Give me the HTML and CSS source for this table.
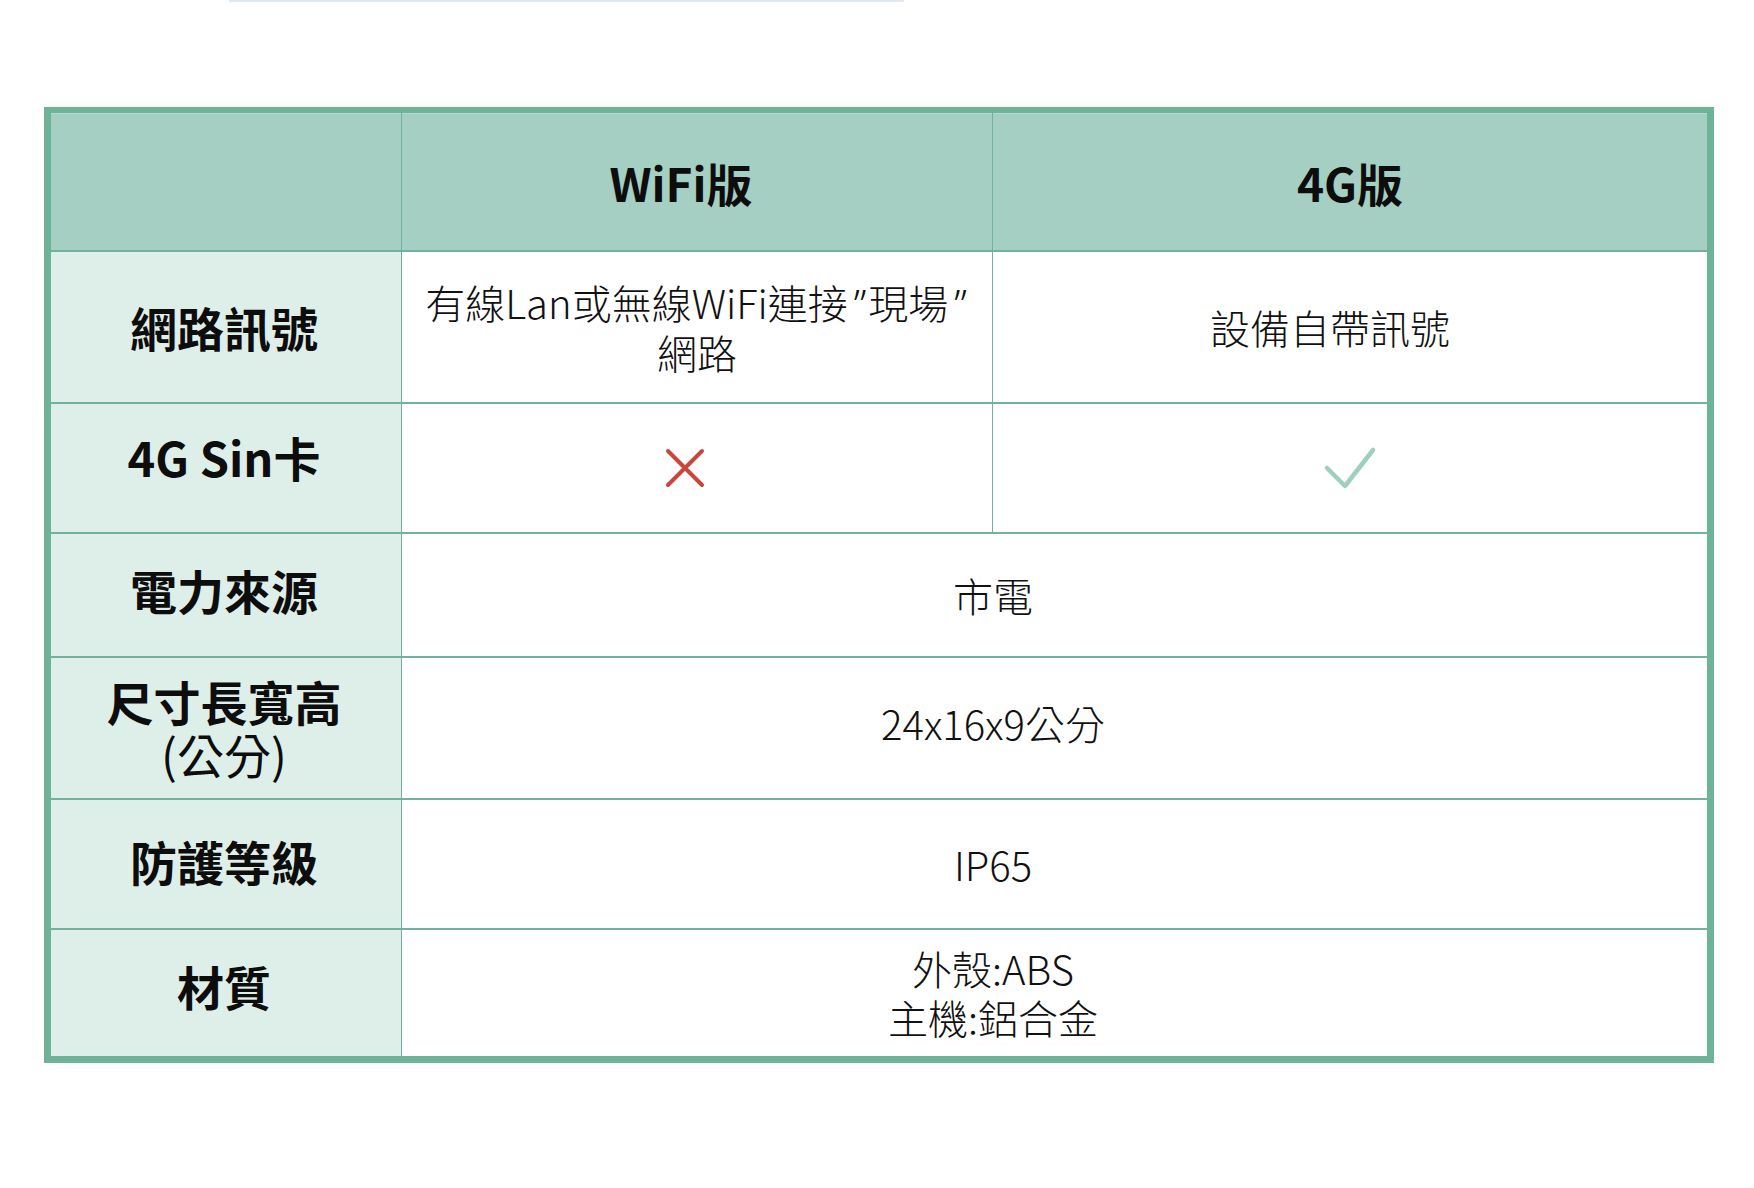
FILE: index.html
```html
<!DOCTYPE html>
<html lang="zh-Hant">
<head>
<meta charset="utf-8">
<title>規格比較</title>
<link rel="stylesheet" href="styles.css">
</head>
<body>
<div class="page">
  <div class="top-rule"></div>
  <div class="spec">
    <div class="cell head"></div>
    <div class="cell head head-wifi">WiFi版</div>
    <div class="cell head">4G版</div>

    <div class="cell label">網路訊號</div>
    <div class="cell body"><span>有線Lan或無線WiFi連接<span class="q">”</span>現場<span class="q">”</span><br>網路</span></div>
    <div class="cell body shift-left">設備自帶訊號</div>

    <div class="cell label label-up">4G Sin卡</div>
    <div class="cell body mark-cell">
      <svg class="mark" width="40" height="40" viewBox="0 0 40 40"><path d="M3 3 L37 37 M37 3 L3 37" stroke="#c9463d" stroke-width="4" stroke-linecap="round" fill="none"/></svg>
    </div>
    <div class="cell body">
      <svg class="mark" width="54" height="44" viewBox="0 0 54 44"><path d="M4 22 L22 40 L50 4" stroke="#9fcfbf" stroke-width="4.5" stroke-linecap="round" stroke-linejoin="round" fill="none"/></svg>
    </div>

    <div class="cell label up-10">電力來源</div>
    <div class="cell body merged">市電</div>

    <div class="cell label two-line">尺寸長寬高<br><span class="sub">(公分)</span></div>
    <div class="cell body merged nudge">24x16x9公分</div>

    <div class="cell label up-6">防護等級</div>
    <div class="cell body merged">IP65</div>

    <div class="cell label up-14">材質</div>
    <div class="cell body merged"><span>外殼:ABS<br>主機:鋁合金</span></div>
  </div>
</div>
</body>
</html>
```

FILE: styles.css
```css
html, body {
  margin: 0;
  padding: 0;
  background: #ffffff;
}

.page {
  width: 1754px;
  height: 1188px;
  padding-left: 44px;
  box-sizing: border-box;
  font-family: "Noto Sans CJK TC", "Noto Sans", sans-serif;
  color: #111111;
}

.top-rule {
  margin-left: 185px;
  width: 675px;
  height: 2px;
  background: #dfe9f1;
}

.spec {
  margin-top: 105px;
  width: 1670px;
  box-sizing: border-box;
  border: 7px solid #6cb398;
  border-top-width: 6px;
  background: #72b19b;
  display: grid;
  grid-template-columns: 350px 590px 714px;
  grid-template-rows: 137px 150px 128px 122px 140px 128px 126px;
  column-gap: 1px;
  row-gap: 2px;
}

.cell {
  display: flex;
  align-items: center;
  justify-content: center;
  text-align: center;
  box-sizing: border-box;
}

.head {
  background: #a5cfc2;
  font-weight: 700;
  font-size: 46px;
  color: #0d0d0d;
  border-top: 1px solid #b7dacf;
}

.head-wifi {
  padding-right: 32px;
}

.label {
  background: #deeee8;
  font-weight: 700;
  font-size: 47px;
  line-height: 1.12;
  color: #0d0d0d;
  padding-right: 4px;
}

.label-up {
  padding-bottom: 22px;
}

.up-6 {
  padding-bottom: 6px;
}

.up-10 {
  padding-bottom: 10px;
}

.up-14 {
  padding-bottom: 14px;
}

.two-line {
  flex-direction: column;
}

.sub {
  font-weight: 400;
}

.body {
  background: #ffffff;
  font-weight: 300;
  font-size: 40px;
  line-height: 49px;
  color: #111111;
}

.q {
  font-family: "Noto Sans", sans-serif;
  margin: 0 2px 0 6px;
}

.shift-left {
  padding-right: 40px;
}

.mark-cell {
  padding-right: 24px;
}

.mark {
  display: block;
}

.merged {
  grid-column: 2 / 4;
  padding-right: 123px;
}

.nudge {
  padding-bottom: 10px;
}
```
